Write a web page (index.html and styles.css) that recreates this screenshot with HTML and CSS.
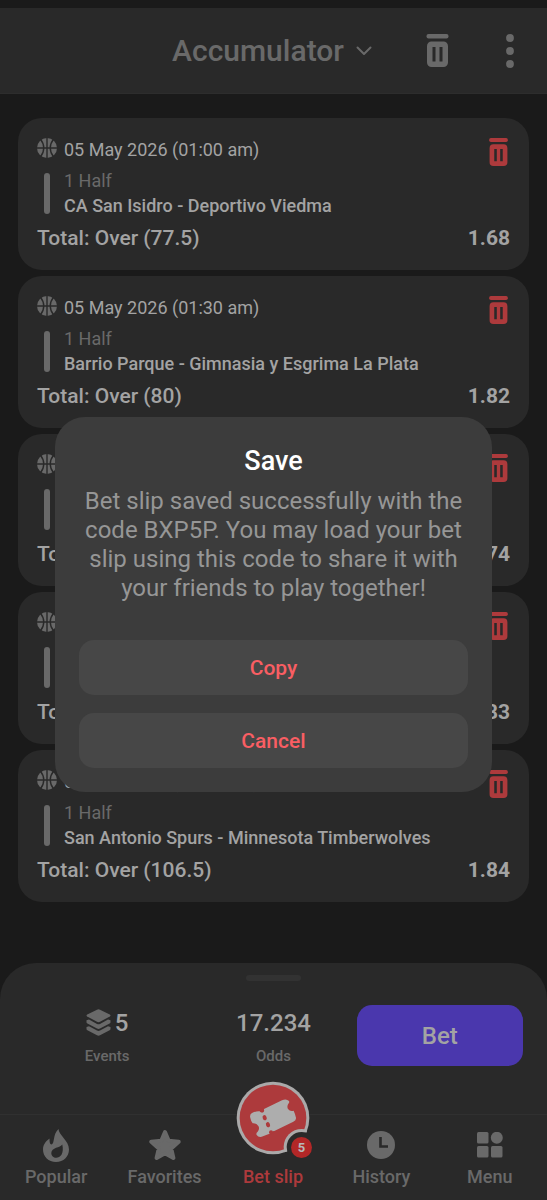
FILE: index.html
```html
<!DOCTYPE html>
<html lang="en">
<head>
<meta charset="utf-8">
<meta name="viewport" content="width=device-width, initial-scale=1">
<title>Bet slip</title>
<link rel="stylesheet" href="styles.css">
</head>
<body>
<svg class="sprite" aria-hidden="true">
  <symbol id="trash" viewBox="0 0 22 33">
    <rect x="0" y="0" width="22" height="4.6" rx="2"/>
    <path fill-rule="evenodd" d="M5 7.500h12a4.500 4.500 0 0 1 4.500 4.500v16.500a4.500 4.500 0 0 1-4.500 4.500h-12a4.500 4.500 0 0 1-4.500-4.500v-16.500a4.500 4.500 0 0 1 4.500-4.500zM6 13v14.500h3v-14.500zM13 13v14.500h3v-14.500z"/>
  </symbol>
  <symbol id="ball" viewBox="0 0 20 20">
    <circle cx="10" cy="10" r="10"/>
    <path class="seam" d="M10 0v20M0 10h20M3.600 1.500c4.200 5 4.200 12 0 17M16.400 1.500c-4.200 5-4.200 12 0 17"/>
  </symbol>
</svg>

<div class="app">
  <header class="topbar">
    <button class="mode" type="button">Accumulator
      <svg width="16" height="10" viewBox="0 0 16 10" fill="none" stroke="currentColor" stroke-width="2" stroke-linecap="round" stroke-linejoin="round"><path d="M1.500 1.500L8 8l6.500-6.500"/></svg>
    </button>
    <div class="tools">
      <button type="button" aria-label="Clear bet slip"><svg width="23" height="33"><use href="#trash"/></svg></button>
      <button type="button" aria-label="More options"><svg width="8" height="34" viewBox="0 0 8 34" fill="currentColor"><circle cx="4" cy="4" r="3.900"/><circle cx="4" cy="17" r="3.900"/><circle cx="4" cy="30" r="3.900"/></svg></button>
    </div>
  </header>

  <main class="list">
    <article class="card">
      <div class="card-head"><svg class="ball" width="20" height="20"><use href="#ball"/></svg><time>05 May 2026 (01:00 am)</time>
        <button class="remove" type="button" aria-label="Remove"><svg width="19" height="28"><use href="#trash"/></svg></button></div>
      <div class="match"><p class="period">1 Half</p><p class="teams">CA San Isidro - Deportivo Viedma</p></div>
      <div class="pick"><span>Total: Over (77.5)</span><b>1.68</b></div>
    </article>
    <article class="card">
      <div class="card-head"><svg class="ball" width="20" height="20"><use href="#ball"/></svg><time>05 May 2026 (01:30 am)</time>
        <button class="remove" type="button" aria-label="Remove"><svg width="19" height="28"><use href="#trash"/></svg></button></div>
      <div class="match"><p class="period">1 Half</p><p class="teams">Barrio Parque - Gimnasia y Esgrima La Plata</p></div>
      <div class="pick"><span>Total: Over (80)</span><b>1.82</b></div>
    </article>
    <article class="card">
      <div class="card-head"><svg class="ball" width="20" height="20"><use href="#ball"/></svg>
        <button class="remove" type="button" aria-label="Remove"><svg width="19" height="28"><use href="#trash"/></svg></button></div>
      <div class="match"><p class="period"></p><p class="teams"></p></div>
      <div class="pick"><span>Total:</span><b>1.74</b></div>
    </article>
    <article class="card">
      <div class="card-head"><svg class="ball" width="20" height="20"><use href="#ball"/></svg>
        <button class="remove" type="button" aria-label="Remove"><svg width="19" height="28"><use href="#trash"/></svg></button></div>
      <div class="match"><p class="period"></p><p class="teams"></p></div>
      <div class="pick"><span>Total:</span><b>1.83</b></div>
    </article>
    <article class="card">
      <div class="card-head"><svg class="ball" width="20" height="20"><use href="#ball"/></svg><time>05 May 2026 (01:30 am)</time>
        <button class="remove" type="button" aria-label="Remove"><svg width="19" height="28"><use href="#trash"/></svg></button></div>
      <div class="match"><p class="period">1 Half</p><p class="teams">San Antonio Spurs - Minnesota Timberwolves</p></div>
      <div class="pick"><span>Total: Over (106.5)</span><b>1.84</b></div>
    </article>
  </main>

  <footer class="sheet">
    <div class="handle"></div>
    <div class="summary">
      <div class="stat">
        <strong><svg width="25" height="27" viewBox="0 0 25 27" fill="#696969"><path d="M11 .700q1.500-.7 3 0l9.800 4.900q1.400.9 0 1.800L14 12.800q-1.500.7-3 0L1.200 7.400q-1.400-.9 0-1.800z"/><path d="M.500 11.200l2.500-.6 8 4.300q1.500.7 3 0l8-4.300 2.500.6v2q0 .8-.9 1.300L14 19.600q-1.500.7-3 0l-9.600-5.100q-.9-.5-.9-1.300z"/><path d="M.500 17.900l2.500-.6 8 4.300q1.500.7 3 0l8-4.300 2.500.6v2q0 .8-.9 1.300L14 26.300q-1.500.7-3 0l-9.600-5.100q-.9-.5-.9-1.300z"/></svg>5</strong>
        <span>Events</span>
      </div>
      <div class="stat"><strong>17.234</strong><span>Odds</span></div>
      <button class="bet" type="button">Bet</button>
    </div>
    <nav class="tabs">
      <a href="#popular"><svg width="26" height="33" viewBox="0 0 26 33" fill="currentColor"><path fill-rule="evenodd" d="M15.500 0c.2 6 10.500 11.500 10.500 20.500C26 27.500 20.500 33 13 33S0 27.500 0 20.500C0 16 2.500 12.500 6.500 9.500c0 3 .3 6 2 6C12 14.500 9.500 5.500 15.500 0zM19.300 15.500c-2 3.300-11 2.800-11 8.500 0 3 2.200 4.800 4.900 4.800 4 0 8.100-4 6.100-13.300z"/></svg>Popular</a>
      <a href="#favorites"><svg width="32" height="32" viewBox="0 0 32 32" fill="currentColor" stroke="currentColor" stroke-width="4" stroke-linejoin="round"><path d="M16 3l3.700 8.700 10 1-7.500 6.700 2.200 9.600-8.400-4.700L7.600 29l2.200-9.600-7.500-6.700 10-1z"/></svg>Favorites</a>
      <a class="active" href="#slip" aria-current="page">
        <span class="fab">
          <svg width="74" height="74" viewBox="46 31 222 222">
            <defs><clipPath id="disc"><circle cx="157" cy="142" r="109"/></clipPath></defs>
            <circle cx="157" cy="142" r="109" fill="#aaa9a9"/>
            <circle cx="157" cy="142" r="100" fill="#ad3a3c"/>
            <path fill="#adadad" d="M94 127Q106 121 117 122Q122 128 129 124L130 115L184 89Q197 83 205 91Q207 95 203 99Q198 107 202 115Q208 123 219 120Q224 131 226 141Q227 148 218 153L161 181Q157 180 153 185L151 188Q138 192 127 197Q114 202 108 193Q105 188 111 183Q118 174 113 166Q107 157 96 158Q91 152 89 142Q86 131 94 127z"/>
            <g fill="#ad3a3c"><circle cx="124" cy="119" r="6"/><ellipse cx="132" cy="141" rx="6" ry="8" transform="rotate(-22 132 141)"/><ellipse cx="142" cy="162" rx="6" ry="8" transform="rotate(-22 142 162)"/><circle cx="151" cy="185" r="6"/></g>
            <g clip-path="url(#disc)"><circle cx="243" cy="229" r="54" fill="#aaa9a9"/></g>
            <circle cx="243" cy="229" r="45" fill="#292929"/>
          </svg>
          <span class="badge">5</span>
        </span>Bet slip</a>
      <a href="#history"><svg width="28" height="28" viewBox="0 0 28 28"><circle cx="14" cy="14" r="14" fill="currentColor"/><path d="M13.500 6v9.500h7.500" fill="none" stroke="#292929" stroke-width="2.600"/></svg>History</a>
      <a href="#menu"><svg width="26" height="26" viewBox="0 0 26 26" fill="currentColor"><rect width="11.500" height="11.500" rx="1.500"/><circle cx="19.800" cy="5.800" r="6"/><rect y="14" width="11.500" height="11.500" rx="1.500"/><rect x="14" y="14" width="11.500" height="11.500" rx="1.500"/></svg>Menu</a>
    </nav>
  </footer>
</div>

<div class="overlay">
  <section class="dialog" role="dialog" aria-modal="true" aria-labelledby="dialog-title">
    <h2 id="dialog-title">Save</h2>
    <p>Bet slip saved successfully with the code BXP5P. You may load your bet slip using this code to share it with your friends to play together!</p>
    <button type="button">Copy</button>
    <button type="button">Cancel</button>
  </section>
</div>
</body>
</html>
```
FILE: styles.css
```css
* { box-sizing: border-box; }
body {
  margin: 0;
  background: #1a1a1a;
  color: #a3a3a3;
  font-family: Roboto, "Liberation Sans", sans-serif;
}
h2, p { margin: 0; }
button {
  margin: 0;
  padding: 0;
  border: 0;
  background: none;
  color: inherit;
  font: inherit;
}
svg { display: block; flex: none; }
.sprite { position: absolute; width: 0; height: 0; }
.seam { fill: none; stroke: #292929; stroke-width: 1.4px; }

.app {
  display: flex;
  flex-direction: column;
  min-height: 100vh;
  padding-top: 8px;
}

/* Top bar */
.topbar {
  display: grid;
  grid-template-columns: 1fr auto 1fr;
  align-items: center;
  height: 86px;
  padding: 0 33px 0 30px;
  background: #292929;
  border-bottom: 1px solid #2d2d2d;
  color: #696969;
}
.mode {
  grid-column: 2;
  display: flex;
  align-items: center;
  gap: 12px;
  font-size: 30px;
  font-weight: 500;
}
.tools {
  display: flex;
  align-items: center;
  justify-content: flex-end;
  gap: 57px;
}
.tools svg { fill: currentColor; }

/* Selections */
.list {
  display: flex;
  flex-direction: column;
  gap: 6px;
  padding: 24px 18px;
}
.card {
  height: 152px;
  padding: 20px 19px;
  border-radius: 24px;
  background: #292929;
}
.card-head {
  display: flex;
  align-items: flex-start;
  gap: 7px;
  height: 32px;
}
.card-head time {
  font-size: 18px;
  line-height: 23px;
}
.ball { fill: #696969; }
.remove {
  margin-left: auto;
  padding-right: 2px;
}
.remove svg { fill: #ad3a3c; }
.match {
  display: flex;
  flex-direction: column;
  justify-content: flex-end;
  position: relative;
  height: 48px;
  padding-left: 27px;
  font-size: 18px;
  line-height: 25px;
}
.match::before {
  content: "";
  position: absolute;
  top: 3px;
  left: 7px;
  width: 6px;
  height: 41px;
  border-radius: 3px;
  background: #696969;
}
.period { color: #696969; }
.teams { font-weight: 500; }
.pick {
  display: flex;
  justify-content: space-between;
  padding-top: 6px;
  font-size: 21px;
  line-height: 28px;
  font-weight: 500;
}
.pick b { font-weight: 700; }

/* Bottom sheet */
.sheet {
  margin-top: auto;
  padding-top: 12px;
  border-radius: 36px 36px 0 0;
  background: #292929;
}
.handle {
  width: 55px;
  height: 6px;
  margin: 0 auto 24px;
  border-radius: 3px;
  background: #323232;
}
.summary {
  display: grid;
  grid-template-columns: 1fr 1fr 1fr;
  align-items: start;
  padding: 0 24px 48px;
}
.stat {
  display: flex;
  flex-direction: column;
  align-items: center;
  gap: 6px;
}
.stat strong {
  display: flex;
  align-items: center;
  gap: 4px;
  height: 35px;
  font-size: 24px;
  font-weight: 500;
}
.stat span {
  color: #696969;
  font-size: 15px;
  font-weight: 500;
  line-height: 20px;
}
.bet {
  height: 61px;
  padding-top: 1px;
  border-radius: 15px;
  background: #4a37ad;
  font-size: 24px;
  font-weight: 500;
}
.tabs {
  display: grid;
  grid-template-columns: repeat(5, 1fr);
  height: 86px;
  padding: 9px 3px 0 2px;
  border-top: 1px solid #303030;
}
.tabs a {
  display: grid;
  grid-template-rows: 42px 22px;
  align-content: start;
  place-items: center;
  color: #696969;
  font-size: 18px;
  font-weight: 500;
  line-height: 22px;
  text-decoration: none;
}
.tabs a.active { color: #ad3a3c; }
.fab {
  position: relative;
  align-self: end;
  margin-bottom: 11px;
}
.badge {
  position: absolute;
  right: -2px;
  bottom: -3px;
  width: 21px;
  height: 21px;
  border-radius: 50%;
  background: #b22727;
  color: #b8b8b8;
  font-size: 13px;
  font-weight: 700;
  line-height: 21px;
  text-align: center;
}

/* Dialog */
.overlay {
  position: fixed;
  inset: 0;
  display: grid;
  place-items: center;
  padding-top: 8px;
}
.dialog {
  display: flex;
  flex-direction: column;
  gap: 18px;
  width: 80%;
  padding: 24px;
  border-radius: 30px;
  background: #3c3c3c;
  text-align: center;
}
.dialog h2 {
  padding-top: 4px;
  color: #fff;
  font-size: 27px;
  font-weight: 500;
  line-height: 32px;
}
.dialog p {
  margin: -8px -4px 19px;
  color: #969696;
  font-size: 24px;
  line-height: 29px;
}
.dialog button {
  height: 55px;
  padding-top: 1px;
  border-radius: 15px;
  background: #474747;
  color: #f95e63;
  font-size: 21px;
  font-weight: 500;
}
```
